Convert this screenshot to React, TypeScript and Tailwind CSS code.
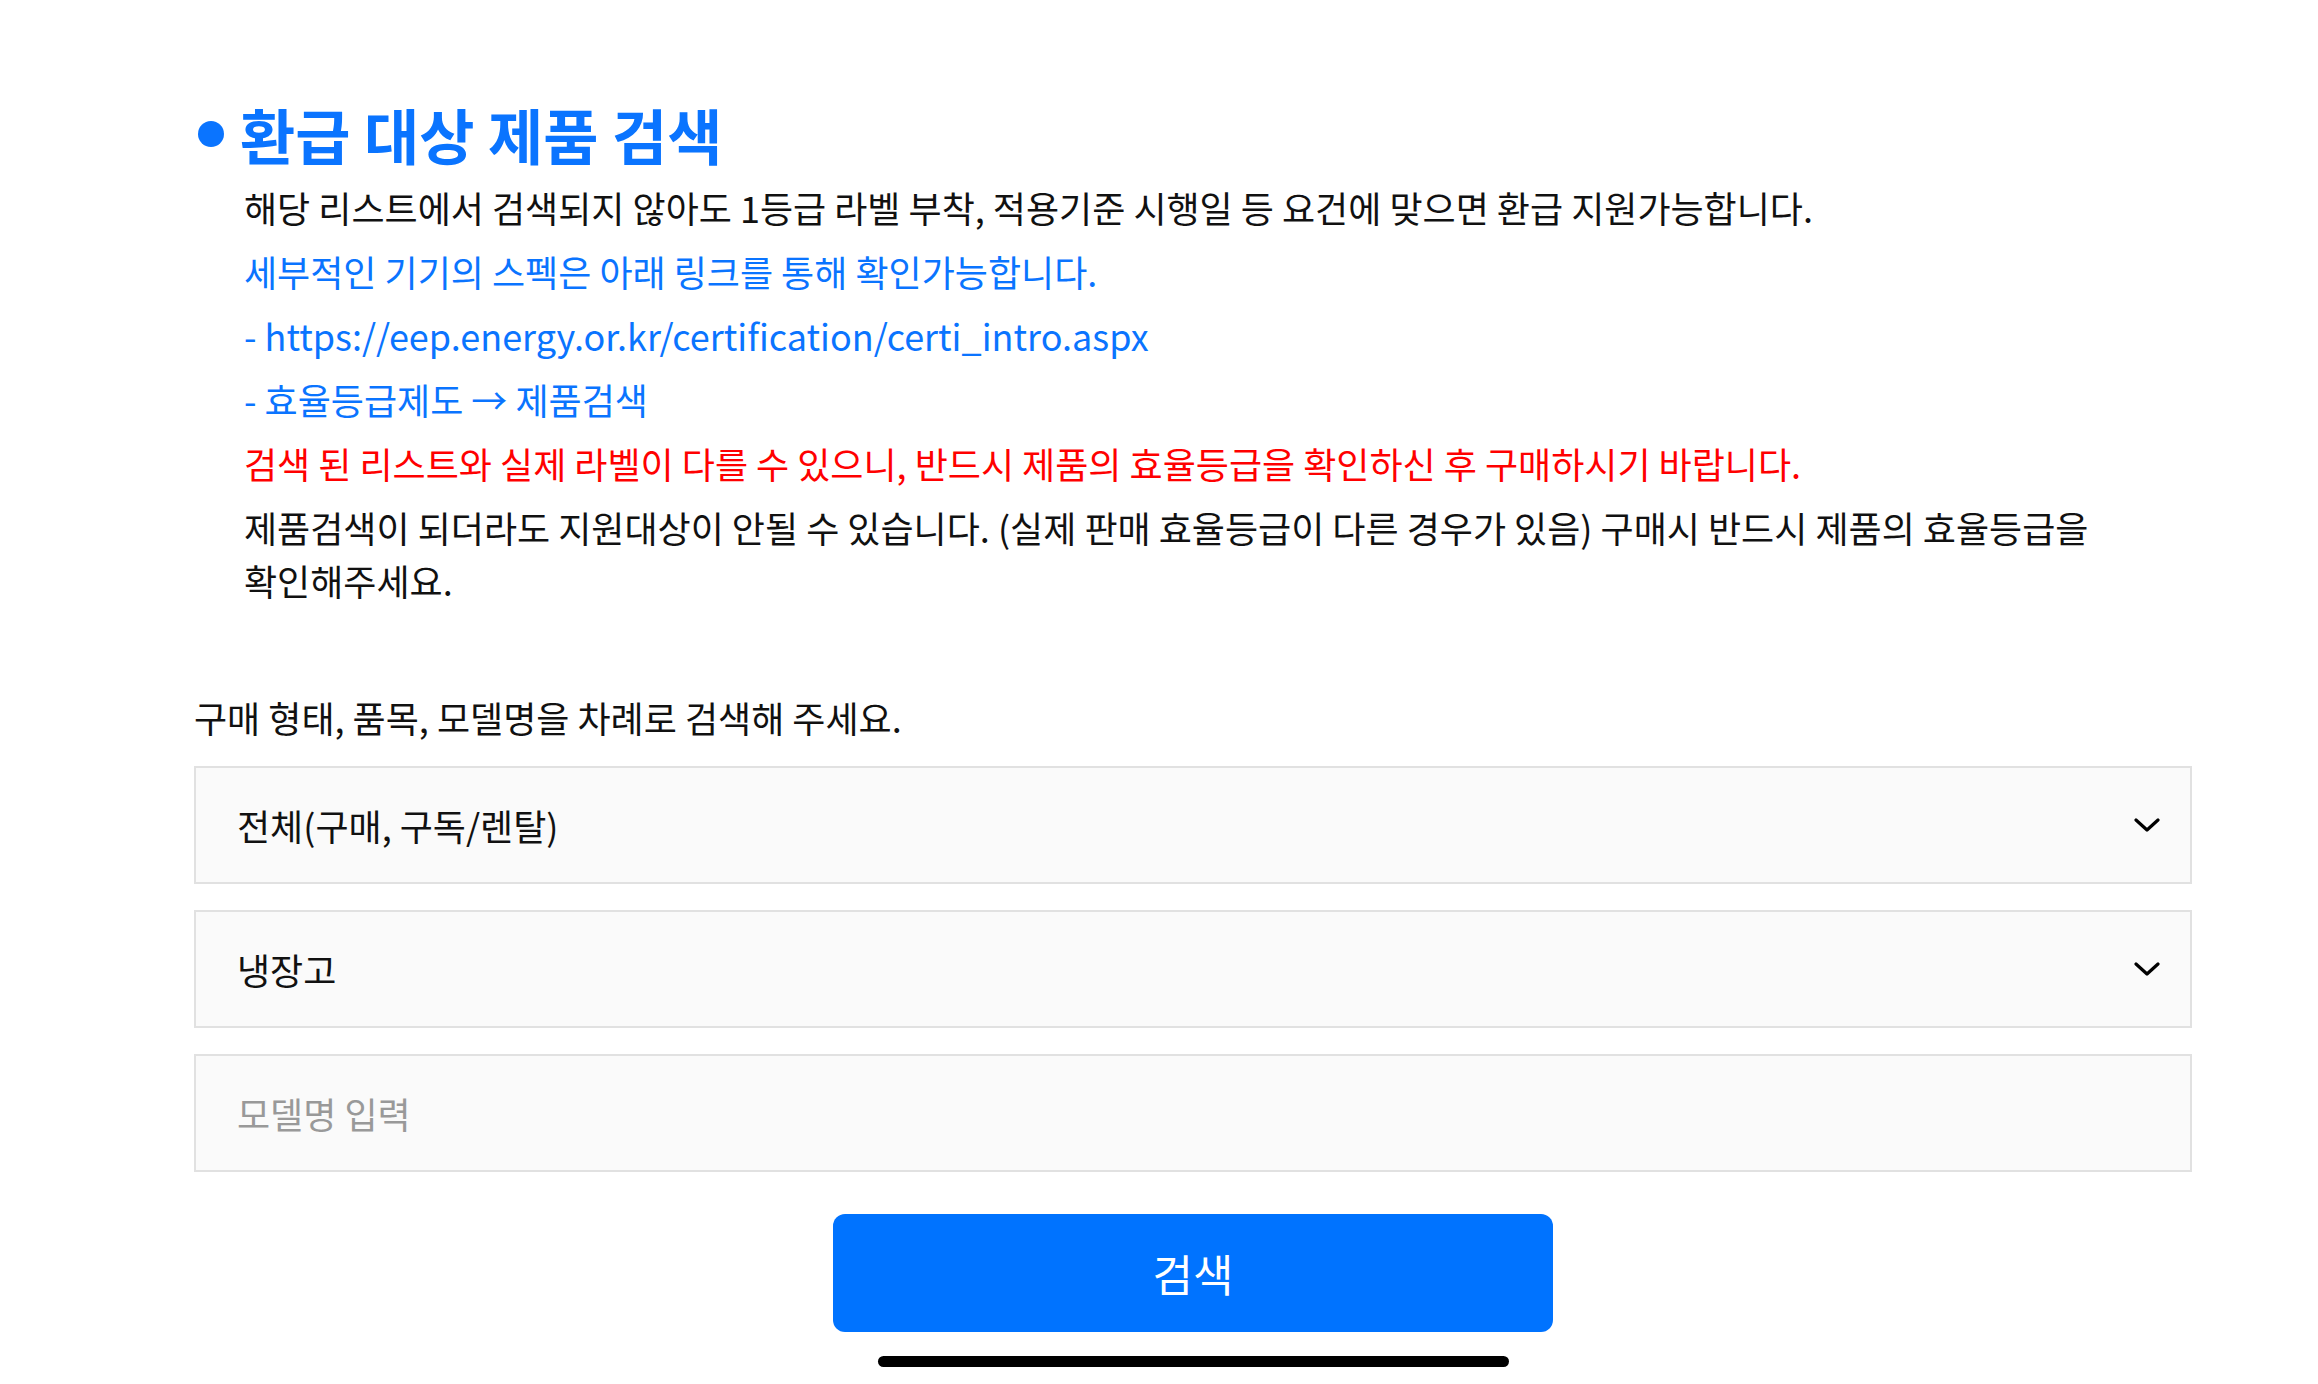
import { useState } from "react";

const PURCHASE_TYPES = ["전체(구매, 구독/렌탈)", "구매", "구독/렌탈"];
const PRODUCT_TYPES = ["냉장고", "김치냉장고", "세탁기", "에어컨", "TV"];

const FONT = "font-['Noto_Sans_CJK_KR','Noto_Sans',sans-serif]";

const Chevron = () => (
  <svg
    xmlns="http://www.w3.org/2000/svg"
    viewBox="0 0 26 15"
    fill="none"
    stroke="currentColor"
    strokeWidth={3.2}
    strokeLinecap="round"
    strokeLinejoin="round"
    className="pointer-events-none absolute right-[32px] top-1/2 h-[15px] w-[26px] -translate-y-1/2 text-black"
  >
    <path d="M2 2.5 13 12.5 24 2.5" />
  </svg>
);

type SelectFieldProps = {
  options: string[];
  value: string;
  onChange: (value: string) => void;
};

const SelectField = ({ options, value, onChange }: SelectFieldProps) => (
  <div className="relative">
    <select
      value={value}
      onChange={(event) => onChange(event.target.value)}
      className="h-[118px] w-full cursor-pointer appearance-none border-2 border-[#e1e1e1] bg-[#fafafa] pl-[41px] pr-[90px] text-[36px] text-[#111] outline-none"
    >
      {options.map((option) => (
        <option key={option} value={option}>
          {option}
        </option>
      ))}
    </select>
    <Chevron />
  </div>
);

const App = () => {
  const [purchaseType, setPurchaseType] = useState(PURCHASE_TYPES[0]);
  const [productType, setProductType] = useState(PRODUCT_TYPES[0]);
  const [modelName, setModelName] = useState("");

  return (
    <div
      className={`min-h-screen bg-white pb-[16px] pl-[194px] pr-[126px] pt-[99px] ${FONT}`}
    >
      <h2 className="flex items-center gap-[16px] text-[60px] font-bold leading-[70px] text-[#0a74ff]">
        <span className="ml-[4px] h-[26px] w-[26px] shrink-0 rounded-full bg-[#0a74ff]" />
        환급 대상 제품 검색
      </h2>

      <div className="mt-[12px] flex flex-col gap-[11px] break-keep pl-[50px] text-[36px] leading-[53px] text-[#111]">
        <p>
          해당 리스트에서 검색되지 않아도 1등급 라벨 부착, 적용기준 시행일 등
          요건에 맞으면 환급 지원가능합니다.
        </p>
        <p className="text-[#0a74ff]">
          세부적인 기기의 스펙은 아래 링크를 통해 확인가능합니다.
        </p>
        <p className="text-[#0a74ff]">
          - https://eep.energy.or.kr/certification/certi_intro.aspx
        </p>
        <p className="text-[#0a74ff]">- 효율등급제도 → 제품검색</p>
        <p className="text-[#ff0000]">
          검색 된 리스트와 실제 라벨이 다를 수 있으니, 반드시 제품의 효율등급을
          확인하신 후 구매하시기 바랍니다.
        </p>
        <p>
          제품검색이 되더라도 지원대상이 안될 수 있습니다. (실제 판매 효율등급이
          다른 경우가 있음) 구매시 반드시 제품의 효율등급을 확인해주세요.
        </p>
      </div>

      <p className="mt-[84px] text-[36px] leading-[53px] text-[#111]">
        구매 형태, 품목, 모델명을 차례로 검색해 주세요.
      </p>

      <div className="mt-[22px] flex flex-col gap-[26px]">
        <SelectField
          options={PURCHASE_TYPES}
          value={purchaseType}
          onChange={setPurchaseType}
        />
        <SelectField
          options={PRODUCT_TYPES}
          value={productType}
          onChange={setProductType}
        />
        <input
          type="text"
          value={modelName}
          onChange={(event) => setModelName(event.target.value)}
          placeholder="모델명 입력"
          className="h-[118px] w-full border-2 border-[#e1e1e1] bg-[#fafafa] px-[41px] text-[36px] text-[#111] outline-none placeholder:text-[#999]"
        />
      </div>

      <div className="mt-[42px] flex flex-col items-center">
        <button
          type="button"
          className="h-[118px] w-[720px] rounded-[12px] bg-[#0073ff] text-[44px] text-white"
        >
          검색
        </button>
        <div className="mt-[24px] h-[11px] w-[631px] rounded-full bg-black" />
      </div>
    </div>
  );
};

export default App;
